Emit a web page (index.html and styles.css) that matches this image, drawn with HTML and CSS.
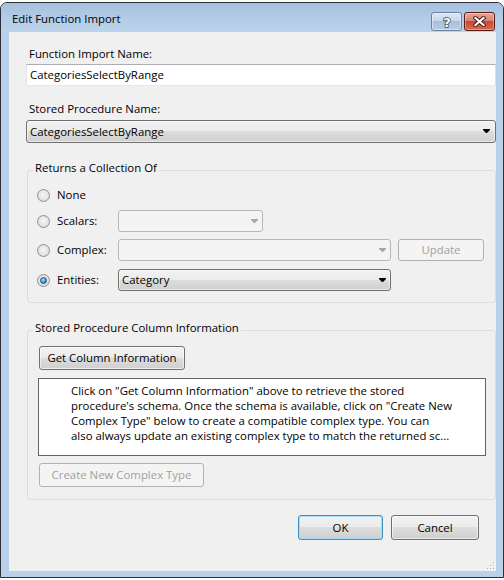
FILE: index.html
```html
<!DOCTYPE html>
<html>
<head><meta charset="UTF-8">
<link rel="stylesheet" href="styles.css"></head>
<body>
<div class="window">
  <div class="titlebar">
    <span class="title">Edit Function Import</span>
    <span class="cap-btn help">
      <svg width="12" height="16" viewBox="0 0 12 16"><text x="6" y="13" text-anchor="middle">?</text></svg>
    </span>
    <span class="cap-btn close">
      <svg width="13" height="11" viewBox="0 0 13 11">
        <path class="x-out" d="M2.5 2 L10.5 9 M10.5 2 L2.5 9"/>
        <path class="x-in" d="M2.5 2 L10.5 9 M10.5 2 L2.5 9"/>
      </svg>
    </span>
  </div>

  <div class="client">
    <div class="field-label">Function Import Name:</div>
    <div class="textbox">CategoriesSelectByRange</div>

    <div class="field-label second">Stored Procedure Name:</div>
    <div class="combo full">
      <span class="combo-text">CategoriesSelectByRange</span>
      <svg class="arrow" width="7" height="5" viewBox="0 0 7 5"><polygon points="0,0 7,0 7,1 4,4 3,4 0,1"/></svg>
    </div>

    <fieldset class="group returns">
      <legend>Returns a Collection Of</legend>
      <div class="option none">
        <span class="radio"></span><span class="option-label">None</span>
      </div>
      <div class="option">
        <span class="radio"></span><span class="option-label">Scalars:</span>
        <div class="combo disabled short">
          <span class="combo-text"></span>
          <svg class="arrow" width="7" height="5" viewBox="0 0 7 5"><polygon points="0,0 7,0 7,1 4,4 3,4 0,1"/></svg>
        </div>
      </div>
      <div class="option">
        <span class="radio"></span><span class="option-label">Complex:</span>
        <div class="combo disabled long">
          <span class="combo-text"></span>
          <svg class="arrow" width="7" height="5" viewBox="0 0 7 5"><polygon points="0,0 7,0 7,1 4,4 3,4 0,1"/></svg>
        </div>
        <button class="btn update" disabled>Update</button>
      </div>
      <div class="option entities">
        <span class="radio checked"></span><span class="option-label">Entities:</span>
        <div class="combo long">
          <span class="combo-text">Category</span>
          <svg class="arrow" width="7" height="5" viewBox="0 0 7 5"><polygon points="0,0 7,0 7,1 4,4 3,4 0,1"/></svg>
        </div>
      </div>
    </fieldset>

    <fieldset class="group columns">
      <legend>Stored Procedure Column Information</legend>
      <button class="btn get-info">Get Column Information</button>
      <div class="info-box">
        <div>Click on "Get Column Information" above to retrieve the stored</div>
        <div>procedure's schema. Once the schema is available, click on "Create New</div>
        <div>Complex Type" below to create a compatible complex type. You can</div>
        <div>also always update an existing complex type to match the returned sc...</div>
      </div>
      <button class="btn create" disabled>Create New Complex Type</button>
    </fieldset>

    <div class="actions">
      <button class="btn ok">OK</button>
      <button class="btn cancel">Cancel</button>
    </div>

    <svg class="grip" width="8" height="8" viewBox="0 0 8 8">
      <rect x="7" y="1" width="1" height="1" fill="#fff"/>
      <rect x="6" y="0" width="1" height="1" fill="#b0b0b0"/>
      <rect x="7" y="4" width="1" height="1" fill="#fff"/>
      <rect x="6" y="3" width="1" height="1" fill="#b0b0b0"/>
      <rect x="4" y="4" width="1" height="1" fill="#fff"/>
      <rect x="3" y="3" width="1" height="1" fill="#b0b0b0"/>
      <rect x="7" y="7" width="1" height="1" fill="#fff"/>
      <rect x="6" y="6" width="1" height="1" fill="#b0b0b0"/>
      <rect x="4" y="7" width="1" height="1" fill="#fff"/>
      <rect x="3" y="6" width="1" height="1" fill="#b0b0b0"/>
      <rect x="1" y="7" width="1" height="1" fill="#fff"/>
      <rect x="0" y="6" width="1" height="1" fill="#b0b0b0"/>
    </svg>
  </div>
</div>
</body>
</html>
```

FILE: styles.css
```css
body {
  margin: 0;
  background: #ffffff;
  font-family: "Segoe UI", "Open Sans", sans-serif;
  font-size: 11.4px;
  line-height: 16px;
  color: #000000;
  overflow: hidden;
}

/* window frame */
.window {
  display: flex;
  flex-direction: column;
  box-sizing: border-box;
  width: 504px;
  height: 576px;
  margin-top: 2px;
  border: 1px solid #2a2f38;
  border-radius: 7px 7px 0 0;
  background: #bad1ea;
}
.titlebar {
  display: flex;
  align-items: flex-start;
  height: 29px;
  box-sizing: border-box;
  padding: 9px 8px 0 11px;
  border-radius: 6px 6px 0 0;
  background: linear-gradient(#a6c0de, #b4cce6 55%, #bcd3eb);
}
.title {
  margin-top: -1px;
  color: #000000;
}
.cap-btn {
  display: flex;
  align-items: center;
  justify-content: center;
  box-sizing: border-box;
  width: 31px;
  height: 19px;
  border-radius: 3px;
}
.cap-btn.help {
  margin-left: auto;
  border: 1px solid #6c819e;
  background: linear-gradient(#dce7f4, #c7d7ea 45%, #aac0da 50%, #b9cde5);
  box-shadow: inset 0 0 0 1px rgba(255, 255, 255, 0.45);
}
.cap-btn.help text {
  font-family: "DejaVu Sans", sans-serif;
  font-weight: bold;
  font-size: 13px;
  fill: #ffffff;
  stroke: #3b4d66;
  stroke-width: 1.6px;
  paint-order: stroke;
}
.cap-btn.close {
  margin-left: 2px;
  border: 1px solid #5a1d14;
  background: linear-gradient(#e8a79a, #d88472 45%, #c44a33 50%, #d56c53);
  box-shadow: inset 0 0 0 1px rgba(255, 255, 255, 0.35);
}
.x-out {
  stroke: #4a1c14;
  stroke-width: 4.2;
  stroke-linecap: square;
}
.x-in {
  stroke: #ffffff;
  stroke-width: 2.2;
  stroke-linecap: square;
}

/* client area */
.client {
  display: flex;
  flex-direction: column;
  flex: 1;
  margin: 0 7px 6px 8px;
  padding: 14px 0 0 17px;
  background: #f0f0f0;
}
.field-label {
  padding-left: 3px;
}
.field-label.second {
  margin-top: 15px;
}
.textbox {
  height: 22px;
  box-sizing: border-box;
  margin-top: 2px;
  padding-left: 3px;
  line-height: 20px;
  border: 1px solid;
  border-color: #abadb3 #dbdfe6 #e3e9ef #e2e3ea;
  background: #ffffff;
}

/* combo boxes */
.combo {
  display: flex;
  align-items: center;
  box-sizing: border-box;
  height: 22px;
  padding: 0 4px 0 3px;
  border: 1px solid #707070;
  border-radius: 3px;
  background: linear-gradient(#f2f2f2, #ebebeb 50%, #dddddd 50%, #cfcfcf);
  box-shadow: inset 0 0 0 1px rgba(255, 255, 255, 0.55);
}
.combo.full {
  height: 23px;
  margin-top: 3px;
  padding-right: 5px;
}
.combo-text {
  flex: 1;
}
.combo .arrow {
  fill: #000000;
}
.combo.disabled {
  border-color: #b5b8ba;
  background: #f4f4f4;
  box-shadow: none;
}
.combo.disabled .arrow {
  fill: #a8a8a8;
}
.combo.short {
  width: 145px;
}
.combo.long {
  width: 273px;
}

/* group boxes */
.group {
  min-width: 0;
  margin: 17px 0 0 1px;
  border: 1px solid #d5dfe5;
  border-radius: 3px;
}
.group legend {
  padding: 0 2px 4px;
  line-height: 16px;
}
.returns {
  display: flex;
  flex-direction: column;
  gap: 7px;
  padding: 4px 0 11px 9px;
}
.returns legend {
  margin-left: -4px;
}
.option {
  display: flex;
  align-items: center;
  height: 22px;
}
.option.none {
  margin-bottom: -3px;
}
.option.entities {
  margin-top: 1px;
}
.radio {
  display: flex;
  align-items: center;
  justify-content: center;
  box-sizing: border-box;
  width: 13px;
  height: 13px;
  margin-right: 7px;
  border: 1px solid #8e9092;
  border-radius: 50%;
  background: radial-gradient(circle at 50% 45%, #f7f7f7 0, #e4e4e4 55%, #cdcdcd 100%);
}
.radio.checked::after {
  content: '';
  width: 5px;
  height: 5px;
  border-radius: 50%;
  border: 1px solid #1c4a75;
  background: radial-gradient(circle at 40% 35%, #b2e6fb 0, #3a9bd8 55%, #175b93 100%);
}
.option-label {
  width: 61px;
}

/* buttons */
.btn {
  box-sizing: border-box;
  height: 24px;
  padding: 0;
  font: inherit;
  color: #000000;
  border: 1px solid #707070;
  border-radius: 3px;
  background: linear-gradient(#f2f2f2, #ebebeb 50%, #dddddd 50%, #cfcfcf);
  box-shadow: inset 0 0 0 1px rgba(255, 255, 255, 0.6);
}
.btn:disabled {
  color: #a0a0a0;
  border-color: #adb2b5;
  background: #f4f4f4;
  box-shadow: none;
}
.btn.update {
  width: 86px;
  height: 22px;
  margin-left: 7px;
}
.columns {
  display: flex;
  flex-direction: column;
  align-items: flex-start;
  padding: 6px 0 12px 10px;
}
.columns legend {
  margin-left: -5px;
}
.btn.get-info {
  width: 146px;
  margin-left: 1px;
}
.info-box {
  align-self: stretch;
  box-sizing: border-box;
  height: 78px;
  margin: 8px 9px 7px 0;
  padding: 4px 0 0 32px;
  line-height: 15px;
  white-space: nowrap;
  overflow: hidden;
  border: 1px solid #646464;
  background: #ffffff;
}
.btn.create {
  width: 165px;
  margin-left: 1px;
}

.actions {
  display: flex;
  justify-content: flex-end;
  gap: 8px;
  margin-top: 15px;
  padding-right: 17px;
}
.btn.ok,
.btn.cancel {
  height: 25px;
}
.btn.ok {
  width: 85px;
  border-color: #3c8fc9;
  box-shadow: inset 0 0 0 1px #a8dcf6;
}
.btn.cancel {
  width: 88px;
}
.grip {
  align-self: flex-end;
  margin: auto 1px 1px 0;
}
```
